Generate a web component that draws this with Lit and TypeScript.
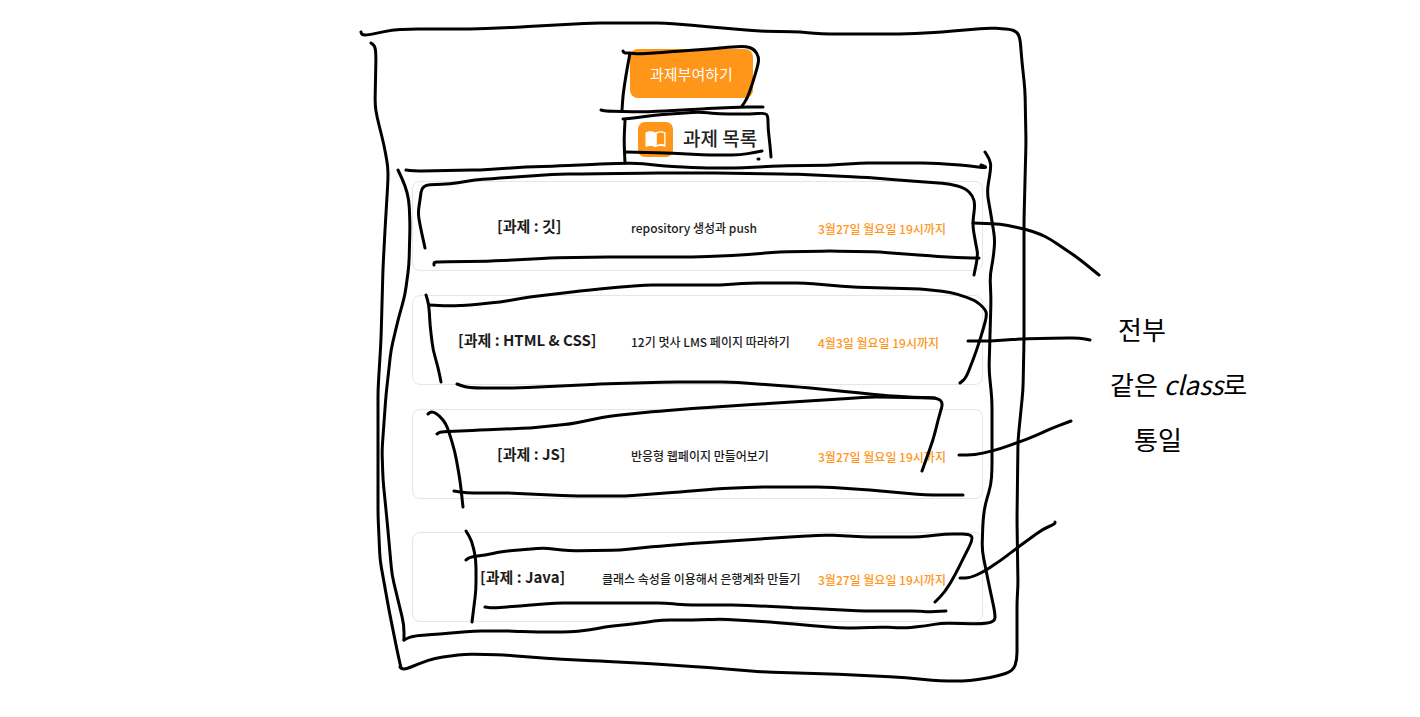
import { LitElement, html, svg, css } from "lit";
import { customElement } from "lit/decorators.js";

type Point = [number, number];

interface Assignment {
  title: string;
  kind: "short" | "long" | "late";
  detail: string;
  due: string;
}

const assignments: Assignment[] = [
  { title: "[과제 : 깃]", kind: "short", detail: "repository 생성과 push", due: "3월27일 월요일 19시까지" },
  { title: "[과제 : HTML & CSS]", kind: "long", detail: "12기 멋사 LMS 페이지 따라하기", due: "4월3일 월요일 19시까지" },
  { title: "[과제 : JS]", kind: "short", detail: "반응형 웹페이지 만들어보기", due: "3월27일 월요일 19시까지" },
  { title: "[과제 : Java]", kind: "late", detail: "클래스 속성을 이용해서 은행계좌 만들기", due: "3월27일 월요일 19시까지" },
];

// Pen strokes, each a list of "x,y" points.
const strokes: string[] = [
  // outer frame
  "361,32 362,35 368,35 392,30 410,29 478,29 520,27 592,23 665,23 700,26 757,31 800,32 822,34 907,34 942,32 988,28 1010,29 1017,32 1020,38 1022,62 1025,90 1026,142 1024,220 1024,340 1023,390 1018,440 1017,520 1018,586 1017,600 1017,660 1013,671 998,676 970,681 940,681 898,677 830,674 765,672 700,667 655,664 600,661 554,659 505,655 466,654 435,658 418,664 404,670 400,667",
  "371,43 375,46 376,55 375,105 377,117 384,145 388,167 388,180 385,230 383,268 381,340 378,390 378,430 378,515 380,560 389,610 397,650 401,668",
  // list frame
  "398,170 405,185 409,200 410,225 409,265 405,295 398,320 391,350 386,395 382,450 383,480 387,520 392,575 404,625 404,640",
  "404,640 412,636 440,634 474,631 510,631 530,632 570,632 590,630 605,627 640,623 662,620 700,620 720,619 770,622 805,625 840,628 862,628 880,627 905,628 925,626 942,623 980,624 995,622 995,613 988,580 982,550 983,520 985,505 991,485 992,470 992,400 989,370 991,300 990,275 993,260 995,240 991,215 987,192 991,167 990,160 985,152",
  "406,170 414,171 480,170 526,167 560,166 600,164 635,163 665,166 700,168 735,168 780,166 835,165 860,163 930,163 960,165 988,168 981,165",
  // button
  "623,51 624,53 630,53 638,54 670,52 720,48 745,46 754,49 759,57 758,65 752,85 747,99 742,106",
  "630,53 626,75 623,95 622,110",
  "601,110 605,111 640,112 665,111 700,109 740,107 763,107",
  // heading
  "623,119 635,118 655,115 700,112 720,114 750,114 765,113 768,116 768,128 770,145 771,157",
  "625,121 624,140 625,163",
  "625,152 665,153 710,155 740,155 757,152 762,151",
  "758,159 759,159",
  // first card
  "434,265 434,262 440,262 495,261 550,258 600,257 700,257 740,255 780,252 830,251 880,252 930,256 965,258 979,258",
  "425,248 420,225 418,213 420,200 422,185 450,184 475,180 500,178 560,174 590,174 650,173 707,173 790,174 860,177 900,180 950,184 965,188 973,196 975,205 973,220 973,228 976,245 978,255 974,275",
  "973,223 1000,224 1025,229 1040,234 1050,239 1078,258 1099,275",
  // second card
  "426,295 429,305 430,325 433,350 438,367 441,382",
  "429,305 452,306 470,305 500,302 530,297 580,291 610,288 645,285 720,285 750,283 805,283 850,287 920,289 950,292 975,300 985,309 987,315 983,330 976,352 966,378 960,383",
  "457,384 465,387 475,388 520,388 600,384 670,382 730,382 800,387 850,392 880,395 905,397 938,398 943,403 940,413 933,440 927,457 922,471",
  "968,341 990,341 1020,339 1060,338 1080,338 1090,340",
  // third card
  "437,434 440,432 480,430 530,428 570,424 610,416 660,411 700,408 760,404 840,399 870,397 935,398",
  "428,414 432,411 440,416 446,424 449,432 455,452 460,480 463,507",
  "454,491 466,493 510,493 570,496 625,496 680,492 715,489 755,487 825,487 870,490 925,495 963,495",
  "959,455 975,455 1000,449 1035,436 1050,429 1071,421",
  // fourth card
  "466,531 472,541 476,560 476,590 472,622",
  "466,560 470,557 485,555 505,551 545,548 570,551 620,550 660,546 700,543 790,537 825,535 870,537 920,537 945,534 970,534 973,539 965,555 955,575 945,592 935,602",
  "485,607 492,608 520,606 555,603 665,603 685,605 740,605 800,608 865,611 920,611 927,612 946,611",
  "960,578 970,578 983,572 1000,561 1017,548 1043,529 1055,524 1055,522",
];

// Turns a list of points into a line with softly rounded corners.
function curve(list: string): string {
  const p = list.split(" ").map((s) => s.split(",").map(Number) as Point);
  let d = `M${p[0][0]} ${p[0][1]}`;
  for (let i = 1; i < p.length - 1; i++) {
    const [x, y] = p[i];
    const [nx, ny] = p[i + 1];
    const [px, py] = p[i - 1];
    const back = Math.min(8 / Math.hypot(x - px, y - py), 0.5);
    const ahead = Math.min(8 / Math.hypot(nx - x, ny - y), 0.5);
    d += `L${x + (px - x) * back} ${y + (py - y) * back}`;
    d += `Q${x} ${y} ${x + (nx - x) * ahead} ${y + (ny - y) * ahead}`;
  }
  const last = p[p.length - 1];
  return `${d}L${last[0]} ${last[1]}`;
}

@customElement("assignment-card")
export class AssignmentCard extends LitElement {
  static properties = { item: { attribute: false } };
  declare item: Assignment;

  static styles = css`
    :host {
      display: block;
    }
    .card {
      box-sizing: border-box;
      min-height: 90px;
      display: grid;
      grid-template-columns: 218px 187px 1fr;
      align-items: center;
      border: 1px solid #e6e6e6;
      border-radius: 8px;
      color: #1c1c1c;
      white-space: nowrap;
    }
    .card.late {
      grid-template-columns: 189px 216px 1fr;
    }
    .title {
      margin: 0;
      font-size: 15px;
      line-height: 20px;
      font-weight: 700;
    }
    .short .title {
      padding-left: 84px;
    }
    .long .title {
      padding-left: 45px;
    }
    .late .title {
      padding-left: 67px;
    }
    .detail,
    .due {
      margin: 0;
      padding-top: 4px;
      font-size: 12px;
      line-height: 20px;
      font-weight: 500;
    }
    .due {
      padding-top: 6px;
      color: #ff9519;
    }
  `;

  render() {
    const { title, kind, detail, due } = this.item;
    return html`<article class="card ${kind}">
      <h2 class="title">${title}</h2>
      <p class="detail">${detail}</p>
      <p class="due">${due}</p>
    </article>`;
  }
}

@customElement("app-root")
export class AppRoot extends LitElement {
  static styles = css`
    :host {
      display: block;
      min-height: 100vh;
      background: #fff;
      overflow: hidden;
      font-family: "Noto Sans CJK KR", "Noto Sans", sans-serif;
    }
    .page {
      box-sizing: border-box;
      padding: 49px 25px 94px 0;
    }
    .board {
      position: relative;
      max-width: 571px;
      margin: 0 auto;
    }
    .head {
      width: 135px;
      margin: 0 auto 24px;
      display: flex;
      flex-direction: column;
      align-items: flex-start;
      gap: 24px;
    }
    .assign {
      height: 49px;
      padding: 0 20px;
      border: 0;
      border-radius: 8px;
      background: #ff9519;
      color: #fff;
      font: inherit;
      font-size: 15px;
      white-space: nowrap;
      cursor: pointer;
    }
    .heading {
      display: flex;
      align-items: flex-start;
      gap: 10px;
      margin: 0 0 0 8px;
      font-size: 19px;
      line-height: 32px;
      font-weight: 500;
      color: #222;
      white-space: nowrap;
    }
    .book {
      width: 35px;
      height: 35px;
      flex: none;
    }
    .list {
      margin: 0;
      padding: 0;
      list-style: none;
      display: flex;
      flex-direction: column;
      gap: 24px;
    }
    .item:last-child {
      margin-top: 9px;
    }
    .ink {
      position: absolute;
      top: -49px;
      left: -412px;
      width: 1420px;
      height: 717px;
      overflow: visible;
      pointer-events: none;
      fill: none;
      stroke: #000;
      stroke-width: 3;
      stroke-linecap: round;
      stroke-linejoin: round;
    }
    .note {
      position: absolute;
      top: 252px;
      left: 698px;
      margin: 0;
      font-size: 26px;
      line-height: 55px;
      color: #000;
      white-space: nowrap;
    }
    .line {
      display: block;
    }
    .first {
      padding-left: 8px;
    }
    .last {
      padding-left: 24px;
    }
  `;

  render() {
    return html`<main class="page">
      <div class="board">
        <header class="head">
          <button class="assign" type="button">과제부여하기</button>
          <h1 class="heading">
            <svg class="book" viewBox="0 0 35 35" aria-hidden="true">
              <rect width="35" height="35" rx="7" fill="#ff9519" />
              <path
                fill="#fff"
                fill-rule="evenodd"
                d="M7.500 10.500C10.500 8.700 14.500 8.800 17.500 10.600C20.500 8.800 24.500 8.700 27.500 10.500V25C24.500 23.500 20.500 23.500 17.500 25.200C14.500 23.500 10.500 23.500 7.500 25ZM18.800 11.500V22.900C21 22 24 21.800 26.200 22.400V11.200C24 10.200 21 10.300 18.800 11.500Z"
              />
            </svg>
            <span>과제 목록</span>
          </h1>
        </header>
        <ul class="list">
          ${assignments.map(
            (a) => html`<li class="item"><assignment-card .item=${a}></assignment-card></li>`,
          )}
        </ul>
        <svg class="ink" aria-hidden="true">${strokes.map((s) => svg`<path d=${curve(s)} />`)}</svg>
        <p class="note">
          <span class="line first">전부</span>
          <span class="line">같은 <i>class</i>로</span>
          <span class="line last">통일</span>
        </p>
      </div>
    </main>`;
  }
}
